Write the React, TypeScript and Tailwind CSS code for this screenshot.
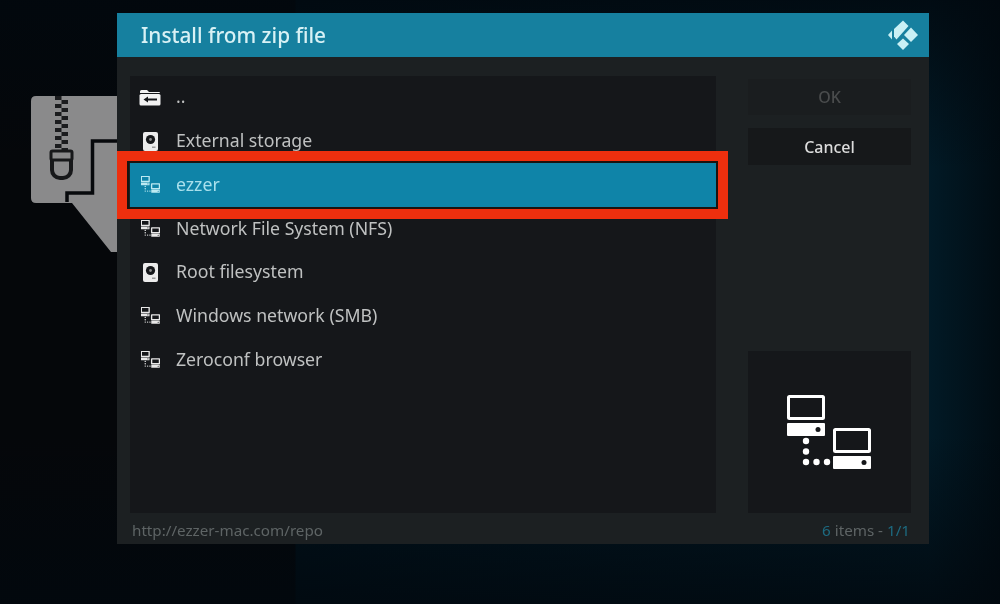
function NetworkIcon({ className, dot = "#15171a", weight = 3 }: { className?: string; dot?: string; weight?: number }) {
  return (
    <svg viewBox="0 0 85 75" className={className} fill="none">
      <rect x="1.5" y="1.5" width="35" height="22" rx="1" stroke="currentColor" strokeWidth={weight} />
      <rect x="0" y="28" width="38" height="13" rx="1" fill="currentColor" />
      <circle cx="31" cy="34.5" r="2.5" fill={dot} />
      <rect x="47.5" y="34.5" width="35" height="22" rx="1" stroke="currentColor" strokeWidth={weight} />
      <rect x="46" y="61" width="38" height="13" rx="1" fill="currentColor" />
      <circle cx="77" cy="67.5" r="2.5" fill={dot} />
      <g fill="currentColor">
        <circle cx="19" cy="46" r="3.2" />
        <circle cx="19" cy="56.5" r="3.2" />
        <circle cx="19" cy="67" r="3.2" />
        <circle cx="29.5" cy="67" r="3.2" />
        <circle cx="40" cy="67" r="3.2" />
      </g>
    </svg>
  );
}

function DriveIcon({ className }: { className?: string }) {
  return (
    <svg viewBox="0 0 15 19" className={className}>
      <rect x="0" y="0" width="15" height="19" rx="2" fill="currentColor" />
      <circle cx="7.5" cy="7.5" r="4.6" fill="#15171a" />
      <circle cx="7.5" cy="7.5" r="1.4" fill="#8a8a8a" />
      <rect x="9" y="14.5" width="3.5" height="1.5" fill="#9a9a9a" />
    </svg>
  );
}

function BackFolderIcon({ className }: { className?: string }) {
  return (
    <svg viewBox="0 0 22 17" className={className}>
      <path d="M1 2.5 Q1 1 2.5 1 H8 L10 3 H20 Q21 3 21 4 H1 Z" fill="currentColor" />
      <rect x="0.5" y="5" width="21" height="11.5" rx="1.5" fill="currentColor" />
      <path d="M4.5 10.5 L9 7.5 V9.5 H18 V11.5 H9 V13.5 Z" fill="#15171a" />
    </svg>
  );
}

function KodiLogo({ className }: { className?: string }) {
  return (
    <svg viewBox="0 0 30 30" className={className} fill="currentColor">
      <polygon points="0,15 4,10.5 4,19.5" />
      <polygon points="15,0.5 20.5,6 8.5,19.5 6,16.5 6,9" />
      <polygon points="23,7.5 30,15 23,22 16,15" />
      <polygon points="15,18.5 21,24 15,30 9,24" />
    </svg>
  );
}

function ZipIcon({ className }: { className?: string }) {
  const teeth = [0, 1, 2, 3, 4, 5, 6];
  return (
    <svg viewBox="0 0 86 156" className={className}>
      <path d="M5 0 H86 V156 H80 L41 107 H5 Q0 107 0 102 V5 Q0 0 5 0 Z" fill="#8a8a8b" />
      <path d="M86 45 H61.5 V97 H36 V106" fill="none" stroke="#07090c" strokeWidth="3.5" />
      {teeth.map((i) => (
        <g key={i} fill="#1b1c1e">
          <rect x="24" y={i * 8} width="6.5" height="4" />
          <rect x="30.5" y={i * 8 + 4} width="6.5" height="4" />
        </g>
      ))}
      <rect x="21" y="56" width="19" height="26" rx="8" fill="#8a8a8b" stroke="#17181a" strokeWidth="4" />
      <rect x="20" y="55" width="21" height="9" rx="1.5" fill="#8a8a8b" stroke="#17181a" strokeWidth="3" />
    </svg>
  );
}

const items = [
  { label: "..", icon: "back" },
  { label: "External storage", icon: "drive" },
  { label: "ezzer", icon: "network", active: true },
  { label: "Network File System (NFS)", icon: "network" },
  { label: "Root filesystem", icon: "drive" },
  { label: "Windows network (SMB)", icon: "network" },
  { label: "Zeroconf browser", icon: "network" },
];

export default function App() {
  return (
    <div
      className="relative w-[1000px] h-[604px] overflow-hidden blur-[0.6px] bg-[linear-gradient(180deg,#01080ecc_0,#01080e00_28%,#01080e00_72%,#01080ecc_100%),linear-gradient(90deg,#05070a_0,#05070a_295px,#01121c_296px,#021a26_930px,#010c13_1000px)] pt-[13px] pl-[117px] text-[#bfc1c1]"
      style={{ fontFamily: '"Noto Sans", "Open Sans", sans-serif' }}
    >
      <ZipIcon className="absolute left-[31px] top-[96px] w-[86px] h-[156px]" />

      <div className="relative w-[812px] h-[531px] flex flex-col bg-[#1c2022]">
        {/* Header */}
        <div className="h-[44px] shrink-0 flex items-center justify-between pl-[24px] pr-[11px] bg-[#16809f] text-[#d8f1f5]">
          <h1 className="text-[20.8px] font-medium leading-none">Install from zip file</h1>
          <KodiLogo className="w-[30px] h-[30px] text-[#c9f0f5]" />
        </div>

        {/* Body */}
        <div className="flex flex-1 min-h-0 pt-[19px] pl-[13px] pr-[18px]">
          <div className="w-[586px] bg-[#15171a]">
            {items.map((item) => (
              <div
                key={item.label}
                className={`relative h-[43.7px] flex items-center pl-[46px] pb-[1px] text-[17.7px] leading-none ${
                  item.active ? "bg-[#0f84a8] text-[#a9e0ec]" : ""
                }`}
              >
                <span className="absolute left-[8px] w-[24px] flex justify-center">
                  {item.icon === "back" && <BackFolderIcon className="w-[22px] h-[17px] text-[#f2f2f2]" />}
                  {item.icon === "drive" && <DriveIcon className="w-[15px] h-[19px] text-[#ececec]" />}
                  {item.icon === "network" && (
                    <NetworkIcon
                      weight={6}
                      className={`w-[19px] h-[17px] ${item.active ? "text-[#bdeaf2]" : "text-[#e8e8e8]"}`}
                      dot={item.active ? "#0f84a8" : "#15171a"}
                    />
                  )}
                </span>
                {item.label}
                {item.active && (
                  <div className="absolute -left-[13px] -right-[12px] -top-[12px] -bottom-[12px] border-[10px] border-[#ee2f0e]">
                    <div className="w-full h-full border-2 border-[#1a1410]" />
                  </div>
                )}
              </div>
            ))}
          </div>

          <div className="ml-[32px] w-[163px] flex flex-col">
            <div className="mt-[3px] h-[36px] flex items-center justify-center bg-[#1a1d1f] text-[#4a4c4d] text-[16px] font-medium">
              OK
            </div>
            <div className="mt-[13px] h-[37px] flex items-center justify-center bg-[#16181a] text-[#dcdcdc] text-[16px] font-medium">
              Cancel
            </div>
            <div className="mt-auto h-[162px] flex items-center justify-center bg-[#15171a]">
              <NetworkIcon className="w-[85px] h-[75px] text-white" />
            </div>
          </div>
        </div>

        {/* Footer */}
        <div className="h-[31px] shrink-0 flex items-center justify-between pl-[15px] pr-[19px] pt-[4px] text-[15.2px] text-[#5e6465]">
          <span>http://ezzer-mac.com/repo</span>
          <span>
            <span className="text-[#1d6a80]">6</span> items - <span className="text-[#1d6a80]">1/1</span>
          </span>
        </div>
      </div>
    </div>
  );
}
